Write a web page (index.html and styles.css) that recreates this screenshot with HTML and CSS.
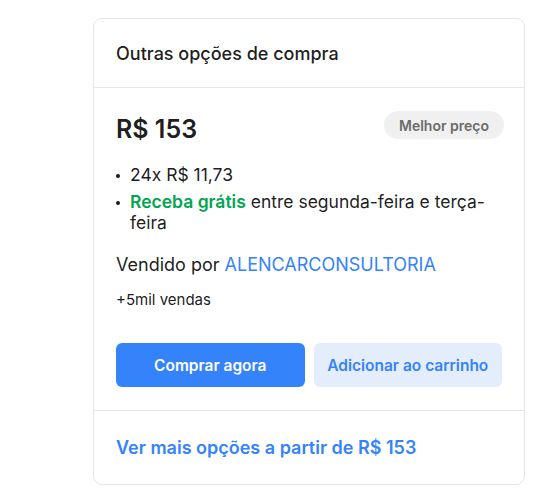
FILE: index.html
```html
<!doctype html>
<html lang="pt-BR">
<head>
  <meta charset="utf-8">
  <title>Outras opções de compra</title>
  <meta name="viewport" content="width=device-width, initial-scale=1" />
  <link rel="stylesheet" href="styles.css">
</head>

<body>
  <div class="card">
    <div class="card-header">Outras opções de compra</div>

    <div class="card-body">
      <div class="price-row">
        <span class="price">R$ 153</span>
        <span class="badge">Melhor preço</span>
      </div>

      <ul class="details">
        <li>24x R$ 11,73</li>
        <li><span class="free">Receba grátis</span> entre segunda-feira e terça-<br>feira</li>
      </ul>

      <p class="seller">Vendido por <a href="#">ALENCARCONSULTORIA</a></p>
      <p class="sales">+5mil vendas</p>

      <div class="actions">
        <button class="btn btn-primary">Comprar agora</button>
        <button class="btn btn-secondary">Adicionar ao carrinho</button>
      </div>
    </div>

    <div class="card-footer">
      <a href="#">Ver mais opções a partir de R$ 153</a>
    </div>
  </div>
</body>
</html>
```
FILE: styles.css
```css
body {
  margin: 0;
  background: #fff;
  font-family: Inter, "Noto Sans", sans-serif;
  color: rgba(0, 0, 0, 0.9);
}

a {
  text-decoration: none;
  color: #3483fa;
}

.card {
  width: 432px;
  box-sizing: border-box;
  margin: 18px 0 0 93px;
  border: solid 1px #e6e6e6;
  border-radius: 9px;
}

.card-header {
  height: 68px;
  display: flex;
  align-items: center;
  padding: 0 22px;
  border-bottom: solid 1px #e6e6e6;
  font-size: 18px;
  font-weight: 500;
}

.card-body {
  padding: 23px 22px;
}

.price-row {
  display: flex;
  justify-content: space-between;
  align-items: flex-start;
}

.price {
  font-size: 25px;
  font-weight: 600;
  line-height: 36px;
}

.badge {
  height: 28px;
  display: flex;
  align-items: center;
  padding: 0 15px;
  margin-right: -2px;
  border-radius: 14px;
  background: #f0f0f0;
  color: #6b6b6b;
  font-size: 14px;
  font-weight: 600;
}

.details {
  list-style: none;
  margin: 17px 0 0;
  padding: 0;
  font-size: 17.5px;
  line-height: 21px;
}

.details li {
  padding-left: 14px;
}

.details li + li {
  margin-top: 6px;
}

.details li::before {
  content: "";
  display: inline-block;
  width: 4px;
  height: 4px;
  margin-left: -14px;
  margin-right: 10px;
  border-radius: 50%;
  background: rgba(0, 0, 0, 0.9);
  vertical-align: 0.15em;
}

.free {
  color: #00a650;
  font-weight: 600;
}

.seller {
  margin: 21px 0 0;
  font-size: 18px;
  line-height: 22px;
}

.sales {
  margin: 15px 0 0;
  font-size: 15px;
  line-height: 18px;
}

.actions {
  display: grid;
  grid-template-columns: 1fr 1fr;
  gap: 9px;
  margin-top: 34px;
}

.btn {
  height: 44px;
  border: none;
  border-radius: 6px;
  font-family: inherit;
  font-size: 15.5px;
  font-weight: 600;
}

.btn-primary {
  background: #3483fa;
  color: #fff;
}

.btn-secondary {
  background: #e3edfb;
  color: #3483fa;
}

.card-footer {
  height: 73px;
  display: flex;
  align-items: center;
  padding: 0 22px;
  border-top: solid 1px #e6e6e6;
  font-size: 18px;
  font-weight: 600;
}
```
